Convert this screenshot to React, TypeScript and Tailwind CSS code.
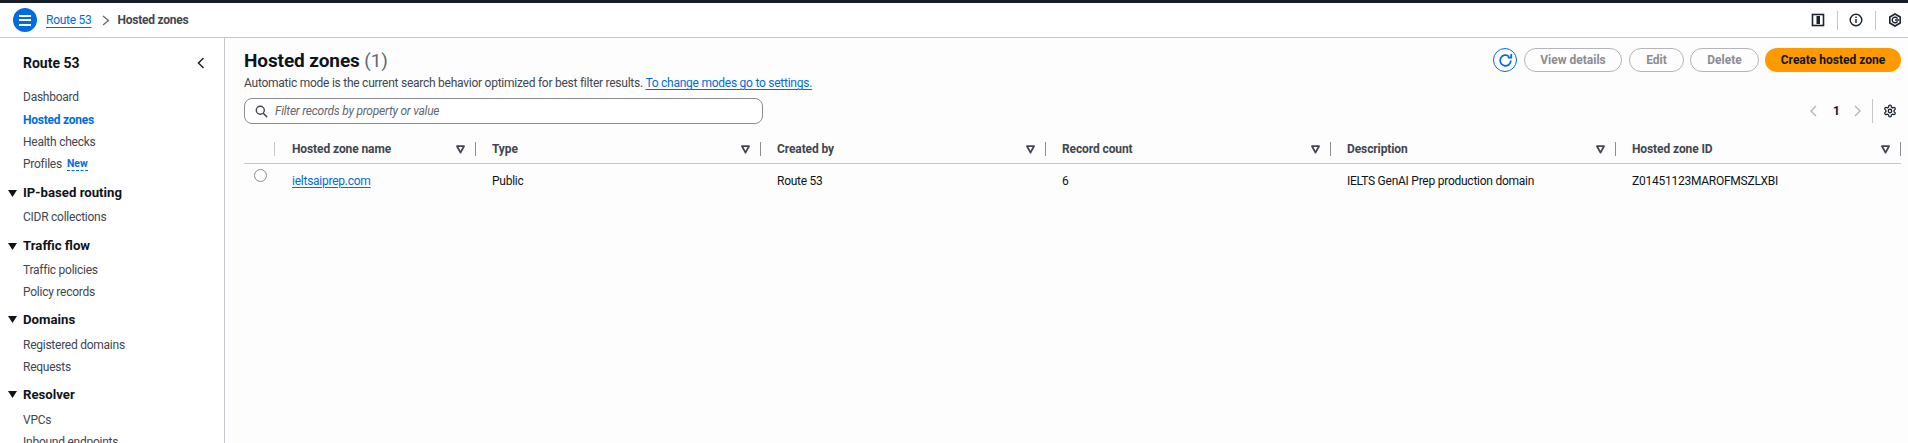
import React from "react";

const font = { fontFamily: 'Roboto, "Noto Sans", sans-serif' };

function NavItem({ label, active, className = "" }: { label: string; active?: boolean; className?: string }) {
  return (
    <div className={`h-[22px] flex items-center pl-[23px] text-[12px] tracking-[-0.25px] ${active ? "font-bold text-[#006ce0]" : "text-[#424650]"} ${className}`}>
      {label}
    </div>
  );
}

function NavSection({ label, className = "mt-[5.5px] mb-[3.5px]" }: { label: string; className?: string }) {
  return (
    <div className={`h-[22px] flex items-center text-[13.2px] font-bold text-[#0f141a] ${className}`}>
      <svg width="9" height="7" viewBox="0 0 9 7" className="ml-[8px] mr-[6px] shrink-0"><path d="M0 0h9L4.5 7z" fill="#0f141a" /></svg>
      {label}
    </div>
  );
}

function Funnel() {
  return (
    <svg width="9" height="9" viewBox="0 0 9 9"><path d="M1 1.2h7L4.5 7.6z" fill="none" stroke="#424650" strokeWidth="1.8" strokeLinejoin="round" /></svg>
  );
}

function HeadCell({ label, first }: { label: string; first?: boolean }) {
  return (
    <div className={`relative h-[30px] flex items-center justify-between pt-[2px] pr-[11px] text-[12px] font-bold tracking-[-0.1px] text-[#424650] ${first ? "pl-[17px]" : "pl-[16px]"}`}>
      <span>{label}</span>
      <Funnel />
      <span className="absolute right-0 top-[9px] h-[14px] w-px bg-[#8c8c94]" />
    </div>
  );
}

function Cell({ children, first }: { children: React.ReactNode; first?: boolean }) {
  return <div className={`h-[32px] flex items-center pt-px text-[12px] tracking-[-0.25px] text-[#0f141a] ${first ? "pl-[17px]" : "pl-[16px]"}`}>{children}</div>;
}

function Btn({ label, w }: { label: string; w: string }) {
  return (
    <div className={`${w} h-[24px] rounded-full border border-[#b4b4bb] flex items-center justify-center text-[12px] font-bold text-[#8c8c94]`}>{label}</div>
  );
}

export default function App() {
  const cols = ["Hosted zone name", "Type", "Created by", "Record count", "Description", "Hosted zone ID"];
  return (
    <div style={font} className="w-[1908px] h-[443px] overflow-hidden flex flex-col bg-[#fdfdfd]">
      <div className="h-[3px] bg-[#161d26] shrink-0" />
      <header className="h-[35px] shrink-0 bg-white border-b border-[#c6c6cd] flex items-center pl-[13px] pr-[6px]">
        <div className="w-[24px] h-[24px] rounded-full bg-[#006ce0] flex flex-col items-center justify-center gap-[2.5px]">
          <span className="w-[12px] h-[2px] bg-white" />
          <span className="w-[12px] h-[2px] bg-white" />
          <span className="w-[12px] h-[2px] bg-white" />
        </div>
        <span className="ml-[9px] text-[12px] tracking-[-0.25px] text-[#006ce0] underline underline-offset-[3px]">Route 53</span>
        <svg width="8" height="11" viewBox="0 0 8 11" className="ml-[10px] mr-[8px]"><path d="M1 1l5.5 4.5L1 10" fill="none" stroke="#656871" strokeWidth="1.3" /></svg>
        <span className="text-[12px] font-bold tracking-[-0.25px] text-[#424650]">Hosted zones</span>
        <div className="ml-auto flex items-center text-[#0f141a]">
          <svg width="14" height="14" viewBox="0 0 14 14"><rect x="1.5" y="1.5" width="11" height="11" fill="none" stroke="#1b232d" strokeWidth="1.6" /><rect x="5.5" y="3" width="3.5" height="8" fill="#1b232d" /></svg>
          <span className="w-px h-[19px] bg-[#c6c6cd] ml-[12px]" />
          <svg width="14" height="14" viewBox="0 0 14 14" className="ml-[11px]"><circle cx="7" cy="7" r="5.8" fill="none" stroke="#1b232d" strokeWidth="1.4" /><path d="M7 6v4M7 3.6v1.3" stroke="#1b232d" strokeWidth="1.4" /></svg>
          <span className="w-px h-[19px] bg-[#c6c6cd] ml-[12px]" />
          <svg width="14" height="14" viewBox="0 0 14 14" className="ml-[12px]"><path d="M7 1l5.2 3v6L7 13l-5.2-3V4z" fill="none" stroke="#1b232d" strokeWidth="1.6" /><path d="M9.5 5.7A2.8 2.8 0 1 0 9.5 8.3M7 7h4" fill="none" stroke="#1b232d" strokeWidth="1.4" /></svg>
        </div>
      </header>
      <div className="flex flex-1 min-h-0">
        <aside className="w-[225px] shrink-0 bg-white border-r border-[#c6c6cd] overflow-hidden">
          <div className="h-[48px] flex items-center justify-between pl-[23px] pr-[19px] pt-[2px] text-[14px] font-bold text-[#0f141a]">
            <span>Route 53</span>
            <svg width="8" height="12" viewBox="0 0 8 12"><path d="M6.5 1L1.5 6l5 5" fill="none" stroke="#1b232d" strokeWidth="1.5" /></svg>
          </div>
          <NavItem label="Dashboard" />
          <NavItem label="Hosted zones" active className="mt-px" />
          <NavItem label="Health checks" />
          <div className="h-[22px] flex items-center pl-[23px] text-[12px] tracking-[-0.25px] text-[#424650]">
            Profiles
            <span className="ml-[5px] text-[10.5px] font-bold tracking-normal text-[#006ce0] border-b border-dashed border-[#006ce0] leading-[13px]">New</span>
          </div>
          <NavSection label="IP-based routing" className="mt-[7px] mb-[2px]" />
          <NavItem label="CIDR collections" className="mt-px" />
          <NavSection label="Traffic flow" className="mt-[7px] mb-[2px]" />
          <NavItem label="Traffic policies" />
          <NavItem label="Policy records" />
          <NavSection label="Domains" />
          <NavItem label="Registered domains" />
          <NavItem label="Requests" />
          <NavSection label="Resolver" />
          <NavItem label="VPCs" />
          <NavItem label="Inbound endpoints" />
        </aside>
        <main className="flex-1 min-w-0 pl-[19px] pr-[7px]">
          <div className="flex items-start justify-between pt-[10px]">
            <div>
              <h1 className="text-[19px] leading-[24px] pt-px font-bold tracking-[-0.1px] text-[#0f141a]">
                Hosted zones <span className="font-normal text-[#656871]">(1)</span>
              </h1>
              <p className="text-[12px] leading-[16px] mt-[2px] tracking-[-0.25px] text-[#424650]">
                Automatic mode is the current search behavior optimized for best filter results.{" "}
                <span className="text-[#006ce0] underline underline-offset-2">To change modes go to settings.</span>
              </p>
            </div>
            <div className="flex items-center">
              <div className="w-[24px] h-[24px] rounded-full border border-[#006ce0] flex items-center justify-center mr-[7px]">
                <svg width="15" height="15" viewBox="0 0 14 14"><path d="M12 7a5 5 0 1 1-1.6-3.7" fill="none" stroke="#006ce0" strokeWidth="1.6" /><path d="M12.4 1v3.4H9" fill="none" stroke="#006ce0" strokeWidth="1.6" /></svg>
              </div>
              <Btn label="View details" w="w-[98px]" />
              <div className="w-[7px]" />
              <Btn label="Edit" w="w-[55px]" />
              <div className="w-[6px]" />
              <Btn label="Delete" w="w-[69px]" />
              <div className="w-[6px]" />
              <div className="w-[136px] h-[24px] rounded-full bg-[#ff9900] flex items-center justify-center text-[12px] font-bold text-[#0f141a]">Create hosted zone</div>
            </div>
          </div>
          <div className="flex items-center justify-between mt-[7px]">
            <div className="w-[519px] h-[26px] rounded-[8px] border border-[#8c8c94] bg-white flex items-center pl-[10px] text-[12px] italic tracking-[-0.25px] text-[#656871]">
              <svg width="13" height="13" viewBox="0 0 13 13" className="mr-[7px]"><circle cx="5.3" cy="5.3" r="4" fill="none" stroke="#424650" strokeWidth="1.4" /><path d="M8.3 8.3l3.8 3.8" stroke="#424650" strokeWidth="1.5" /></svg>
              Filter records by property or value
            </div>
            <div className="flex items-center pr-[4px]">
              <svg width="9" height="12" viewBox="0 0 9 12"><path d="M7 1L2 6l5 5" fill="none" stroke="#b4b4bb" strokeWidth="1.4" /></svg>
              <span className="ml-[15px] mr-[13px] text-[12px] font-bold text-[#0f141a]">1</span>
              <svg width="9" height="12" viewBox="0 0 9 12"><path d="M2 1l5 5-5 5" fill="none" stroke="#b4b4bb" strokeWidth="1.4" /></svg>
              <span className="w-px h-[24px] bg-[#c6c6cd] ml-[10px] mr-[10px]" />
              <svg width="14" height="14" viewBox="0 0 24 24" fill="none" stroke="#1b232d" strokeWidth="2.2"><path d="M12.22 2h-.44a2 2 0 0 0-2 2v.18a2 2 0 0 1-1 1.73l-.43.25a2 2 0 0 1-2 0l-.15-.08a2 2 0 0 0-2.73.73l-.22.38a2 2 0 0 0 .73 2.73l.15.1a2 2 0 0 1 1 1.72v.51a2 2 0 0 1-1 1.74l-.15.09a2 2 0 0 0-.73 2.73l.22.38a2 2 0 0 0 2.73.73l.15-.08a2 2 0 0 1 2 0l.43.25a2 2 0 0 1 1 1.73V20a2 2 0 0 0 2 2h.44a2 2 0 0 0 2-2v-.18a2 2 0 0 1 1-1.73l.43-.25a2 2 0 0 1 2 0l.15.08a2 2 0 0 0 2.73-.73l.22-.39a2 2 0 0 0-.73-2.73l-.15-.08a2 2 0 0 1-1-1.74v-.5a2 2 0 0 1 1-1.74l.15-.09a2 2 0 0 0 .73-2.73l-.22-.38a2 2 0 0 0-2.73-.73l-.15.08a2 2 0 0 1-2 0l-.43-.25a2 2 0 0 1-1-1.73V4a2 2 0 0 0-2-2z" /><circle cx="12" cy="12" r="3" /></svg>
            </div>
          </div>
          <div className="mt-[9px] grid grid-cols-[31px_201px_285px_285px_285px_285px_285px]">
            <div className="relative border-b border-[#c6c6cd]">
              <span className="absolute right-0 top-[9px] h-[14px] w-px bg-[#c6c6cd]" />
            </div>
            {cols.map((c, i) => (
              <div key={c} className="border-b border-[#c6c6cd]"><HeadCell label={c} first={i === 0} /></div>
            ))}
            <div className="flex justify-center pt-[5px] pl-[2px]">
              <span className="w-[13px] h-[13px] rounded-full border border-[#8c8c94] bg-white" />
            </div>
            <Cell first><span className="text-[#006ce0] underline underline-offset-2">ieltsaiprep.com</span></Cell>
            <Cell>Public</Cell>
            <Cell>Route 53</Cell>
            <Cell>6</Cell>
            <Cell>IELTS GenAI Prep production domain</Cell>
            <Cell>Z01451123MAROFMSZLXBI</Cell>
          </div>
        </main>
      </div>
    </div>
  );
}
